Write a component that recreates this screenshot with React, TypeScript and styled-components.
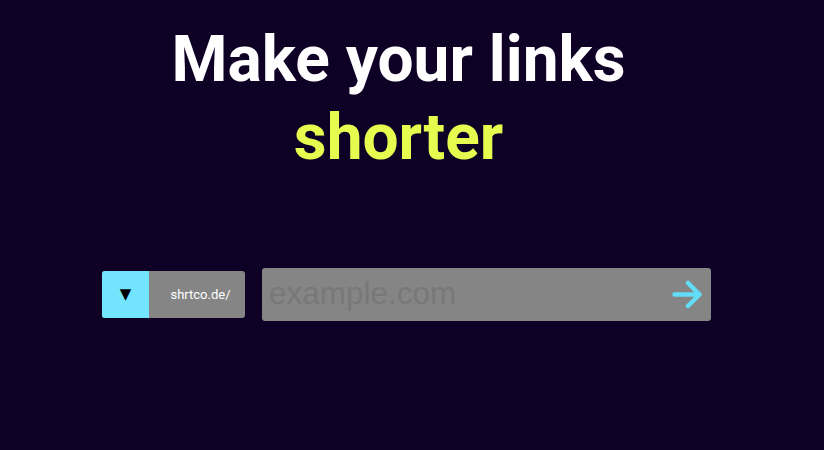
import styled, { createGlobalStyle } from 'styled-components'

const GlobalStyle = createGlobalStyle`
  html, body {
    margin: 0;
    background: #0f0026;
  }
  body {
    font-family: Roboto, 'Liberation Sans', sans-serif;
  }
`

function App() {
  return (
    <Page>
      <GlobalStyle />
      <Hero>
        <Title>
          Make your links
          <br />
          <Accent>shorter</Accent>
        </Title>
      </Hero>
      <Form>
        <Domain>
          <Toggle type="button">▼</Toggle>
          <DomainText>shrtco.de/</DomainText>
        </Domain>
        <UrlBox>
          <UrlInput placeholder="example.com" />
          <Submit type="button" aria-label="Shorten">
            <svg width="31" height="29" viewBox="0 0 31 29" fill="none">
              <path
                d="M2.5 14.5h25M16 3l11.5 11.5L16 26"
                stroke="#62ddf7"
                strokeWidth="4.5"
                strokeLinecap="round"
                strokeLinejoin="round"
              />
            </svg>
          </Submit>
        </UrlBox>
      </Form>
    </Page>
  )
}

const Page = styled.div`
  width: 824px;
  height: 450px;
  box-sizing: border-box;
  padding-top: 21px;
`

const Hero = styled.div`
  width: 797px;
  text-align: center;
`

const Title = styled.h1`
  margin: 0;
  font-family: Roboto, sans-serif;
  font-weight: 700;
  font-size: 64px;
  line-height: 78px;
  color: #ffffff;
`

const Accent = styled.span`
  color: #e8fb4f;
`

const Form = styled.div`
  display: flex;
  align-items: center;
  gap: 17px;
  margin-top: 91px;
  padding-left: 102px;
`

const Domain = styled.div`
  display: flex;
  width: 143px;
  height: 47px;
  border-radius: 3px;
  overflow: hidden;
  background: #858585;
`

const Toggle = styled.button`
  width: 47px;
  height: 47px;
  border: none;
  padding: 0 0 2px;
  background: #72e4fe;
  color: #000;
  font-size: 15px;
  font-family: 'DejaVu Sans', sans-serif;
`

const DomainText = styled.span`
  flex: 1;
  display: flex;
  align-items: center;
  justify-content: center;
  padding-left: 7px;
  color: #ffffff;
  font-family: Roboto, sans-serif;
  font-size: 13px;
`

const UrlBox = styled.div`
  display: flex;
  align-items: center;
  width: 449px;
  height: 53px;
  border-radius: 3px;
  background: #858585;
`

const UrlInput = styled.input`
  flex: 1;
  min-width: 0;
  height: 100%;
  border: none;
  outline: none;
  background: transparent;
  padding: 0 0 2px 7px;
  font-family: 'Liberation Sans', Arial, sans-serif;
  font-size: 31.5px;
  color: #333;

  &::placeholder {
    color: #787878;
  }
`

const Submit = styled.button`
  display: flex;
  border: none;
  background: transparent;
  padding: 0;
  margin-right: 8px;
  cursor: pointer;
`

export default App
